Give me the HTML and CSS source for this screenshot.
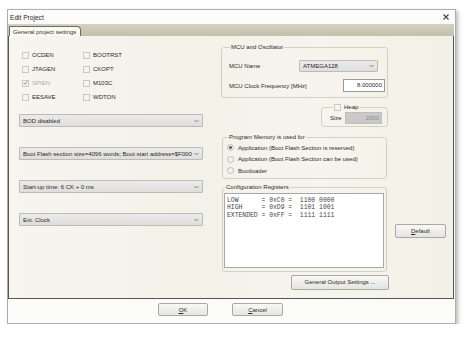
FILE: index.html
```html
<!DOCTYPE html>
<html>
<head>
<meta charset="utf-8">
<link rel="stylesheet" href="styles.css">
</head>
<body>
<div class="window">
  <div class="titlebar">
    <span class="title">Edit Project</span>
    <svg class="close" width="6" height="6" viewBox="0 0 6 6"><path d="M0.5 0.5L5.5 5.5M5.5 0.5L0.5 5.5" stroke="#444" stroke-width="1.1"/></svg>
  </div>
  <div class="tabstrip">
    <div class="tab">General project settings</div>
  </div>
  <div class="panel">
    <div class="leftcol">
      <div class="fuses">
        <div class="cb"><span class="box"></span>OCDEN</div>
        <div class="cb"><span class="box"></span>JTAGEN</div>
        <div class="cb disabled"><span class="box"><svg width="6" height="6" viewBox="0 0 6 6"><path d="M1 3L2.5 4.5L5 1" fill="none" stroke="#777" stroke-width="1"/></svg></span>SPIEN</div>
        <div class="cb"><span class="box"></span>EESAVE</div>
        <div class="cb"><span class="box"></span>BOOTRST</div>
        <div class="cb"><span class="box"></span>CKOPT</div>
        <div class="cb"><span class="box"></span>M103C</div>
        <div class="cb"><span class="box"></span>WDTON</div>
      </div>
      <div class="select wide"><span>BOD disabled</span><svg class="chev" width="5" height="4" viewBox="0 0 5 4"><path d="M0.5 1L2.5 3L4.5 1" fill="none" stroke="#777" stroke-width="0.9"/></svg></div>
      <div class="select wide"><span>Boot Flash section size=4096 words; Boot start address=$F000</span><svg class="chev" width="5" height="4" viewBox="0 0 5 4"><path d="M0.5 1L2.5 3L4.5 1" fill="none" stroke="#777" stroke-width="0.9"/></svg></div>
      <div class="select wide"><span>Start-up time: 6 CK + 0 ms</span><svg class="chev" width="5" height="4" viewBox="0 0 5 4"><path d="M0.5 1L2.5 3L4.5 1" fill="none" stroke="#777" stroke-width="0.9"/></svg></div>
      <div class="select wide"><span>Ext. Clock</span><svg class="chev" width="5" height="4" viewBox="0 0 5 4"><path d="M0.5 1L2.5 3L4.5 1" fill="none" stroke="#777" stroke-width="0.9"/></svg></div>
    </div>
    <div class="rightcol">
      <fieldset class="group mcu">
        <legend>MCU and Oscillator</legend>
        <div class="row r1">
          <span>MCU Name</span>
          <div class="select mcusel"><span>ATMEGA128</span><svg class="chev" width="5" height="4" viewBox="0 0 5 4"><path d="M0.5 1L2.5 3L4.5 1" fill="none" stroke="#777" stroke-width="0.9"/></svg></div>
        </div>
        <div class="row r2">
          <span>MCU Clock Frequency [MHz]</span>
          <div class="input freq">8.000000</div>
        </div>
      </fieldset>
      <fieldset class="group heap">
        <legend><span class="box"></span>Heap</legend>
        <div class="row">
          <span>Size</span>
          <div class="input grayed">2000</div>
        </div>
      </fieldset>
      <fieldset class="group progmem">
        <legend>Program Memory is used for</legend>
        <div class="radio"><span class="dot on"></span>Application (Boot Flash Section is reserved)</div>
        <div class="radio"><span class="dot"></span>Application (Boot Flash Section can be used)</div>
        <div class="radio"><span class="dot"></span>Bootloader</div>
      </fieldset>
      <fieldset class="group config">
        <legend>Configuration Registers</legend>
        <div class="regs">LOW      = 0xC0 =  1100 0000
HIGH     = 0xD9 =  1101 1001
EXTENDED = 0xFF =  1111 1111</div>
      </fieldset>
      <div class="btn gos">General Output Settings ...</div>
    </div>
    <div class="btncol">
      <div class="btn def"><u>D</u>efault</div>
    </div>
  </div>
  <div class="footer">
    <div class="btn ok"><u>O</u>K</div>
    <div class="btn cancel"><u>C</u>ancel</div>
  </div>
</div>
</body>
</html>
```

FILE: styles.css
```css
html, body {
  margin: 0;
  padding: 0;
  background: #ffffff;
}
body {
  font-family: "Liberation Sans", Arial, sans-serif;
  font-size: 6px;
  color: #2a2a2a;
}
.window {
  margin: 9px 0 0 7px;
  width: 447px;
  height: 313px;
  border: 1px solid #aab0b6;
  background: #fbfbfa;
  box-shadow: 2px 2px 4px rgba(0, 0, 0, 0.28);
  display: flex;
  flex-direction: column;
}
.titlebar {
  height: 14px;
  display: flex;
  align-items: center;
  justify-content: space-between;
  padding: 0 6px 0 2px;
  font-size: 6.6px;
}
.close {
  display: block;
}
.tabstrip {
  height: 12px;
  margin: 0 1px 0 0;
  background: linear-gradient(#d4d1be, #c3bfa8);
  display: flex;
  align-items: flex-end;
  padding-left: 1px;
}
.tab {
  height: 10px;
  width: 67px;
  margin-bottom: -1px;
  background: #fbfaf4;
  border: 1px solid #6a6a66;
  border-bottom: none;
  border-radius: 1px 4px 0 0;
  padding-left: 3px;
  line-height: 11px;
  white-space: nowrap;
  overflow: hidden;
  color: #333;
}
.panel {
  height: 263px;
  margin-right: 1px;
  border: 1px solid #555552;
  border-top: none;
  background: linear-gradient(90deg, #f7f5ee, #f3f1e8 40%, #f6f4ec 70%, #f2f0e6);
  display: flex;
  box-sizing: border-box;
}
.leftcol {
  width: 184px;
  padding: 12px 0 0 10px;
  display: flex;
  flex-direction: column;
}
.fuses {
  display: grid;
  grid-auto-flow: column;
  grid-template-rows: repeat(4, 14px);
  grid-template-columns: 61px auto;
  padding-left: 3px;
  margin-bottom: 10px;
}
.cb {
  display: flex;
  align-items: center;
}
.cb.disabled {
  color: #ababab;
}
.box {
  width: 5px;
  height: 5px;
  border: 1px solid #c8c8c8;
  background: #f4f4f4;
  margin-right: 3px;
  display: inline-flex;
  align-items: center;
  justify-content: center;
  flex: none;
}
.box svg {
  display: block;
}
.select {
  height: 13px;
  box-sizing: border-box;
  border: 1px solid #bababa;
  border-radius: 1px;
  background: linear-gradient(#ebebea, #dededd);
  display: flex;
  align-items: center;
  justify-content: space-between;
  padding: 0 3px 0 3px;
  white-space: nowrap;
}
.select.wide {
  margin-bottom: 20px;
}
.chev {
  display: block;
  flex: none;
}
.rightcol {
  width: 167px;
  margin-left: 18px;
  padding-top: 7px;
  display: flex;
  flex-direction: column;
}
fieldset.group {
  margin: 0;
  border: 1px solid #d4d1c4;
  border-radius: 3px;
  padding: 0;
  min-width: 0;
}
legend {
  padding: 0 1px;
  margin-left: 1px;
  line-height: 9px;
  display: flex;
  align-items: center;
}
.row {
  display: flex;
  align-items: center;
  justify-content: space-between;
}
.mcu {
  padding: 8px 2px 5px 7px !important;
}
.mcu .r1 {
  height: 12px;
  margin-bottom: 7px;
}
.mcusel {
  width: 79px;
  height: 12px;
  margin-right: 7px;
  padding-left: 3px;
}
.mcu .r2 {
  height: 13px;
}
.input {
  height: 13px;
  box-sizing: border-box;
  border: 1px solid #9a9a9a;
  background: #ffffff;
  text-align: right;
  padding-right: 2px;
  line-height: 11px;
}
.freq {
  width: 42px;
}
.heap {
  margin: 5px 0 0 100px !important;
  padding: 0 5px 2px 8px !important;
}
.heap legend {
  margin-left: 3px;
}
.heap .row {
  height: 12px;
}
.grayed {
  width: 37px;
  height: 12px;
  background: #c9c9c8;
  border-color: #bdbdbc;
  color: #8a8a8a;
}
.progmem {
  margin: 6px 1px 0 1px !important;
  padding: 0 0 1px 4px !important;
}
.radio {
  height: 11.5px;
  display: flex;
  align-items: center;
}
.dot {
  width: 5px;
  height: 5px;
  border-radius: 50%;
  border: 1px solid #bcbcbc;
  background: #f2f2f2;
  margin-right: 4px;
  display: inline-flex;
  align-items: center;
  justify-content: center;
}
.dot.on::after {
  content: "";
  width: 3px;
  height: 3px;
  border-radius: 50%;
  background: #555;
}
.config {
  margin: 4px 1px 0 1px !important;
  padding: 1px 2px 3px 1px !important;
}
.regs {
  height: 75px;
  box-sizing: border-box;
  border: 1px solid #a8a8a8;
  background: #ffffff;
  font-family: "Liberation Mono", "Courier New", monospace;
  font-size: 6.4px;
  line-height: 7.6px;
  white-space: pre;
  padding: 3px 2px;
  color: #444;
}
.btn {
  height: 14px;
  box-sizing: border-box;
  border: 1px solid #a8a8a6;
  border-radius: 2px;
  background: linear-gradient(#f8f8f7, #e4e4e2);
  display: flex;
  align-items: center;
  justify-content: center;
}
.btn u {
  text-decoration-thickness: 0.5px;
}
.gos {
  width: 98px;
  height: 15px;
  margin-top: 3px;
  align-self: flex-end;
  margin-right: -1px;
}
.btncol {
  margin-left: 7px;
  padding-top: 188px;
}
.def {
  width: 51px;
}
.footer {
  flex: 1;
  display: flex;
  align-items: flex-start;
  padding: 4px 0 0 150px;
  gap: 24px;
  background: #fbfbf8;
}
.ok {
  width: 50px;
  height: 13px;
}
.cancel {
  width: 51px;
  height: 13px;
}
```
